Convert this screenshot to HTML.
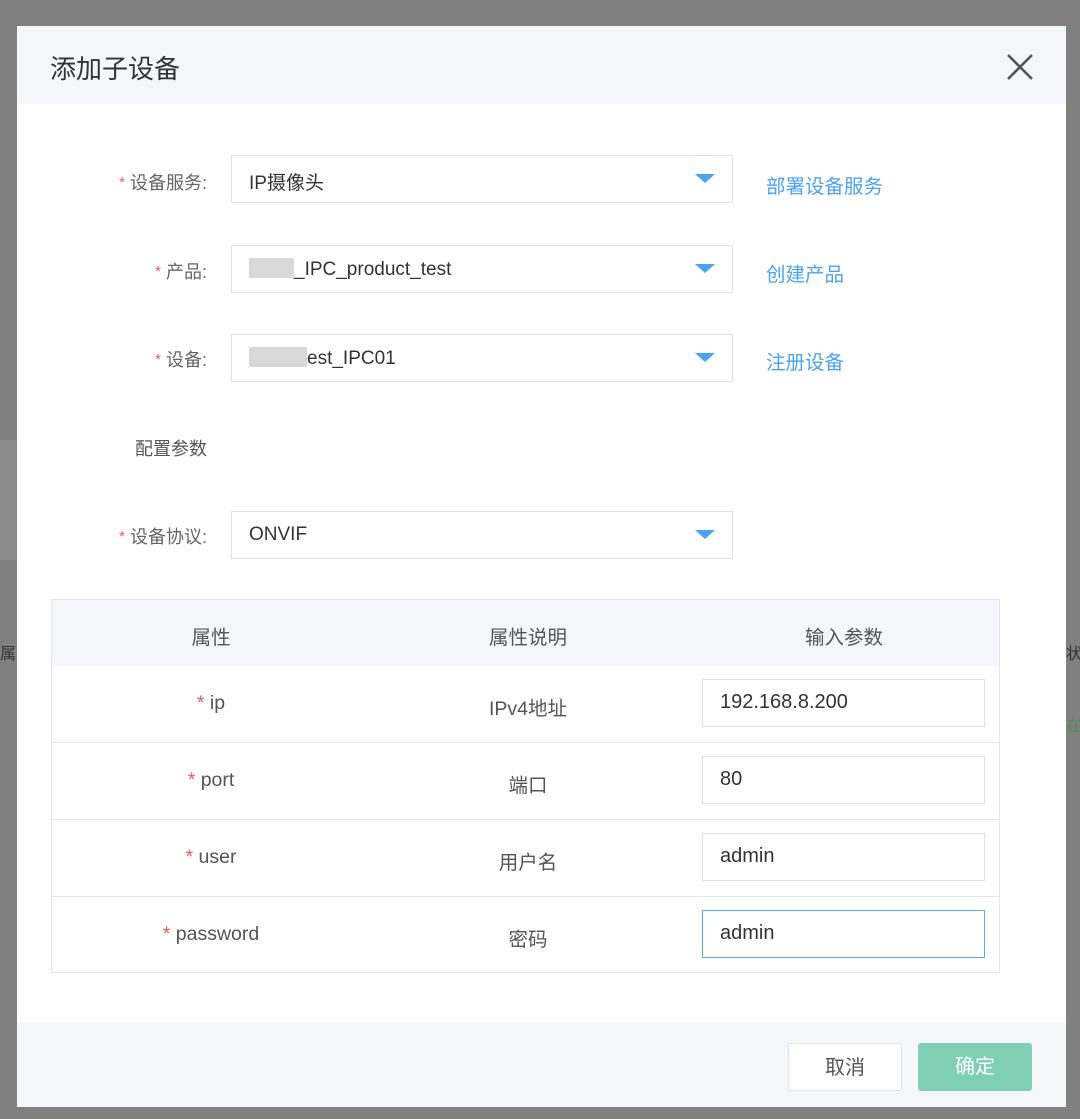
<!DOCTYPE html>
<html><head><meta charset="utf-8"><style>
*{box-sizing:border-box;margin:0;padding:0}
body{width:1080px;height:1119px;background:#808080;position:relative;overflow:hidden;font-family:"Liberation Sans","Noto Sans CJK SC",sans-serif;color:#333}
.abs{position:absolute}
.modal{left:17px;top:26px;width:1049px;height:1081px;background:#fff}
.hdr{left:0;top:0;width:1049px;height:78px;background:#f3f6fa}
.title{left:33px;top:23px;font-size:26px;color:#333}
.lbl{font-size:18px;color:#666;text-align:right;width:190px}
.lbl b{color:#e65c5c;font-weight:normal;margin-right:5px;font-size:15px;vertical-align:2px}
.sel{left:214px;width:502px;height:48px;border:1px solid #dde1e6;background:#fff;font-size:19px;padding:12px 0 0 17px;color:#333}
.arr{position:absolute;right:17px;top:18px;width:0;height:0;border-left:10px solid transparent;border-right:10px solid transparent;border-top:9px solid #4aa3f0}
.link{font-size:19.5px;color:#4aa3f0;left:749px}
.tbl{left:34px;top:573px;width:949px;height:374px;border:1px solid #e2e6ea}
.th{left:0;top:0;width:947px;height:66px;background:#f3f6fa}
.row{left:0;width:947px;border-top:1px solid #e2e6ea;height:77px}
.c{position:absolute;font-size:19.5px;color:#555;text-align:center}
.inp{position:absolute;left:650px;width:283px;height:48px;border:1px solid #dde1e6;font-size:20px;padding:11px 0 0 17px;color:#333}
.ftr{left:0;top:996px;width:1049px;height:85px;background:#f5f7fa}
.btn{top:1017px;width:114px;height:48px;border-radius:3px;font-size:20px;text-align:center;line-height:48px}
</style></head><body>
<div class="abs" style="left:0;top:440px;width:17px;height:120px;background:#8a8a8a"></div>
<div class="abs" style="left:0;top:640px;font-size:16px;color:#333">属</div>
<div class="abs" style="left:1066px;top:640px;font-size:16px;color:#333">状</div>
<div class="abs" style="left:1066px;top:712px;font-size:16px;color:#5a8a5a">在</div>
<div class="abs modal">
 <div class="abs hdr"></div>
 <div class="abs title">添加子设备</div>
 <svg class="abs" style="left:989px;top:27px" width="28" height="28" viewBox="0 0 28 28"><path d="M2 2L26 26M26 2L2 26" stroke="#555" stroke-width="2.6"/></svg>

 <div class="abs lbl" style="left:0;top:143px"><b>*</b>设备服务:</div>
 <div class="abs sel" style="top:129px">IP摄像头<i class="arr"></i></div>
 <div class="abs link" style="top:144px">部署设备服务</div>

 <div class="abs lbl" style="left:0;top:232px"><b>*</b>产品:</div>
 <div class="abs sel" style="top:219px"><span style="display:inline-block;width:45px;height:20px;background:#d8d8d8;vertical-align:-3px;margin-right:0"></span>_IPC_product_test<i class="arr"></i></div>
 <div class="abs link" style="top:232px">创建产品</div>

 <div class="abs lbl" style="left:0;top:320px"><b>*</b>设备:</div>
 <div class="abs sel" style="top:308px"><span style="display:inline-block;width:58px;height:20px;background:#d8d8d8;vertical-align:-3px;margin-right:0"></span>est_IPC01<i class="arr"></i></div>
 <div class="abs link" style="top:320px">注册设备</div>

 <div class="abs lbl" style="left:0;top:409px;color:#555">配置参数</div>

 <div class="abs lbl" style="left:0;top:497px"><b>*</b>设备协议:</div>
 <div class="abs sel" style="top:485px">ONVIF<i class="arr"></i></div>

 <div class="abs tbl">
  <div class="abs th">
   <div class="c" style="left:0;width:318px;top:21px">属性</div>
   <div class="c" style="left:318px;width:316px;top:21px">属性说明</div>
   <div class="c" style="left:634px;width:316px;top:21px">输入参数</div>
  </div>
  <div class="abs row" style="top:66px;border-top:none">
   <div class="c" style="left:0;width:318px;top:26px"><span style="color:#e65c5c">*</span> ip</div>
   <div class="c" style="left:318px;width:316px;top:26px">IPv4地址</div>
   <div class="inp" style="top:13px">192.168.8.200</div>
  </div>
  <div class="abs row" style="top:142px">
   <div class="c" style="left:0;width:318px;top:26px"><span style="color:#e65c5c">*</span> port</div>
   <div class="c" style="left:318px;width:316px;top:26px">端口</div>
   <div class="inp" style="top:13px">80</div>
  </div>
  <div class="abs row" style="top:219px">
   <div class="c" style="left:0;width:318px;top:26px"><span style="color:#e65c5c">*</span> user</div>
   <div class="c" style="left:318px;width:316px;top:26px">用户名</div>
   <div class="inp" style="top:13px">admin</div>
  </div>
  <div class="abs row" style="top:296px">
   <div class="c" style="left:0;width:318px;top:26px"><span style="color:#e65c5c">*</span> password</div>
   <div class="c" style="left:318px;width:316px;top:26px">密码</div>
   <div class="inp" style="top:13px;border-color:#5aaaf0">admin</div>
  </div>
 </div>

 <div class="abs ftr"></div>
 <div class="abs btn" style="left:771px;background:#fff;border:1px solid #e0e3e8;color:#555">取消</div>
 <div class="abs btn" style="left:901px;background:#7ecfb3;color:#fff">确定</div>
</div>
</body></html>
